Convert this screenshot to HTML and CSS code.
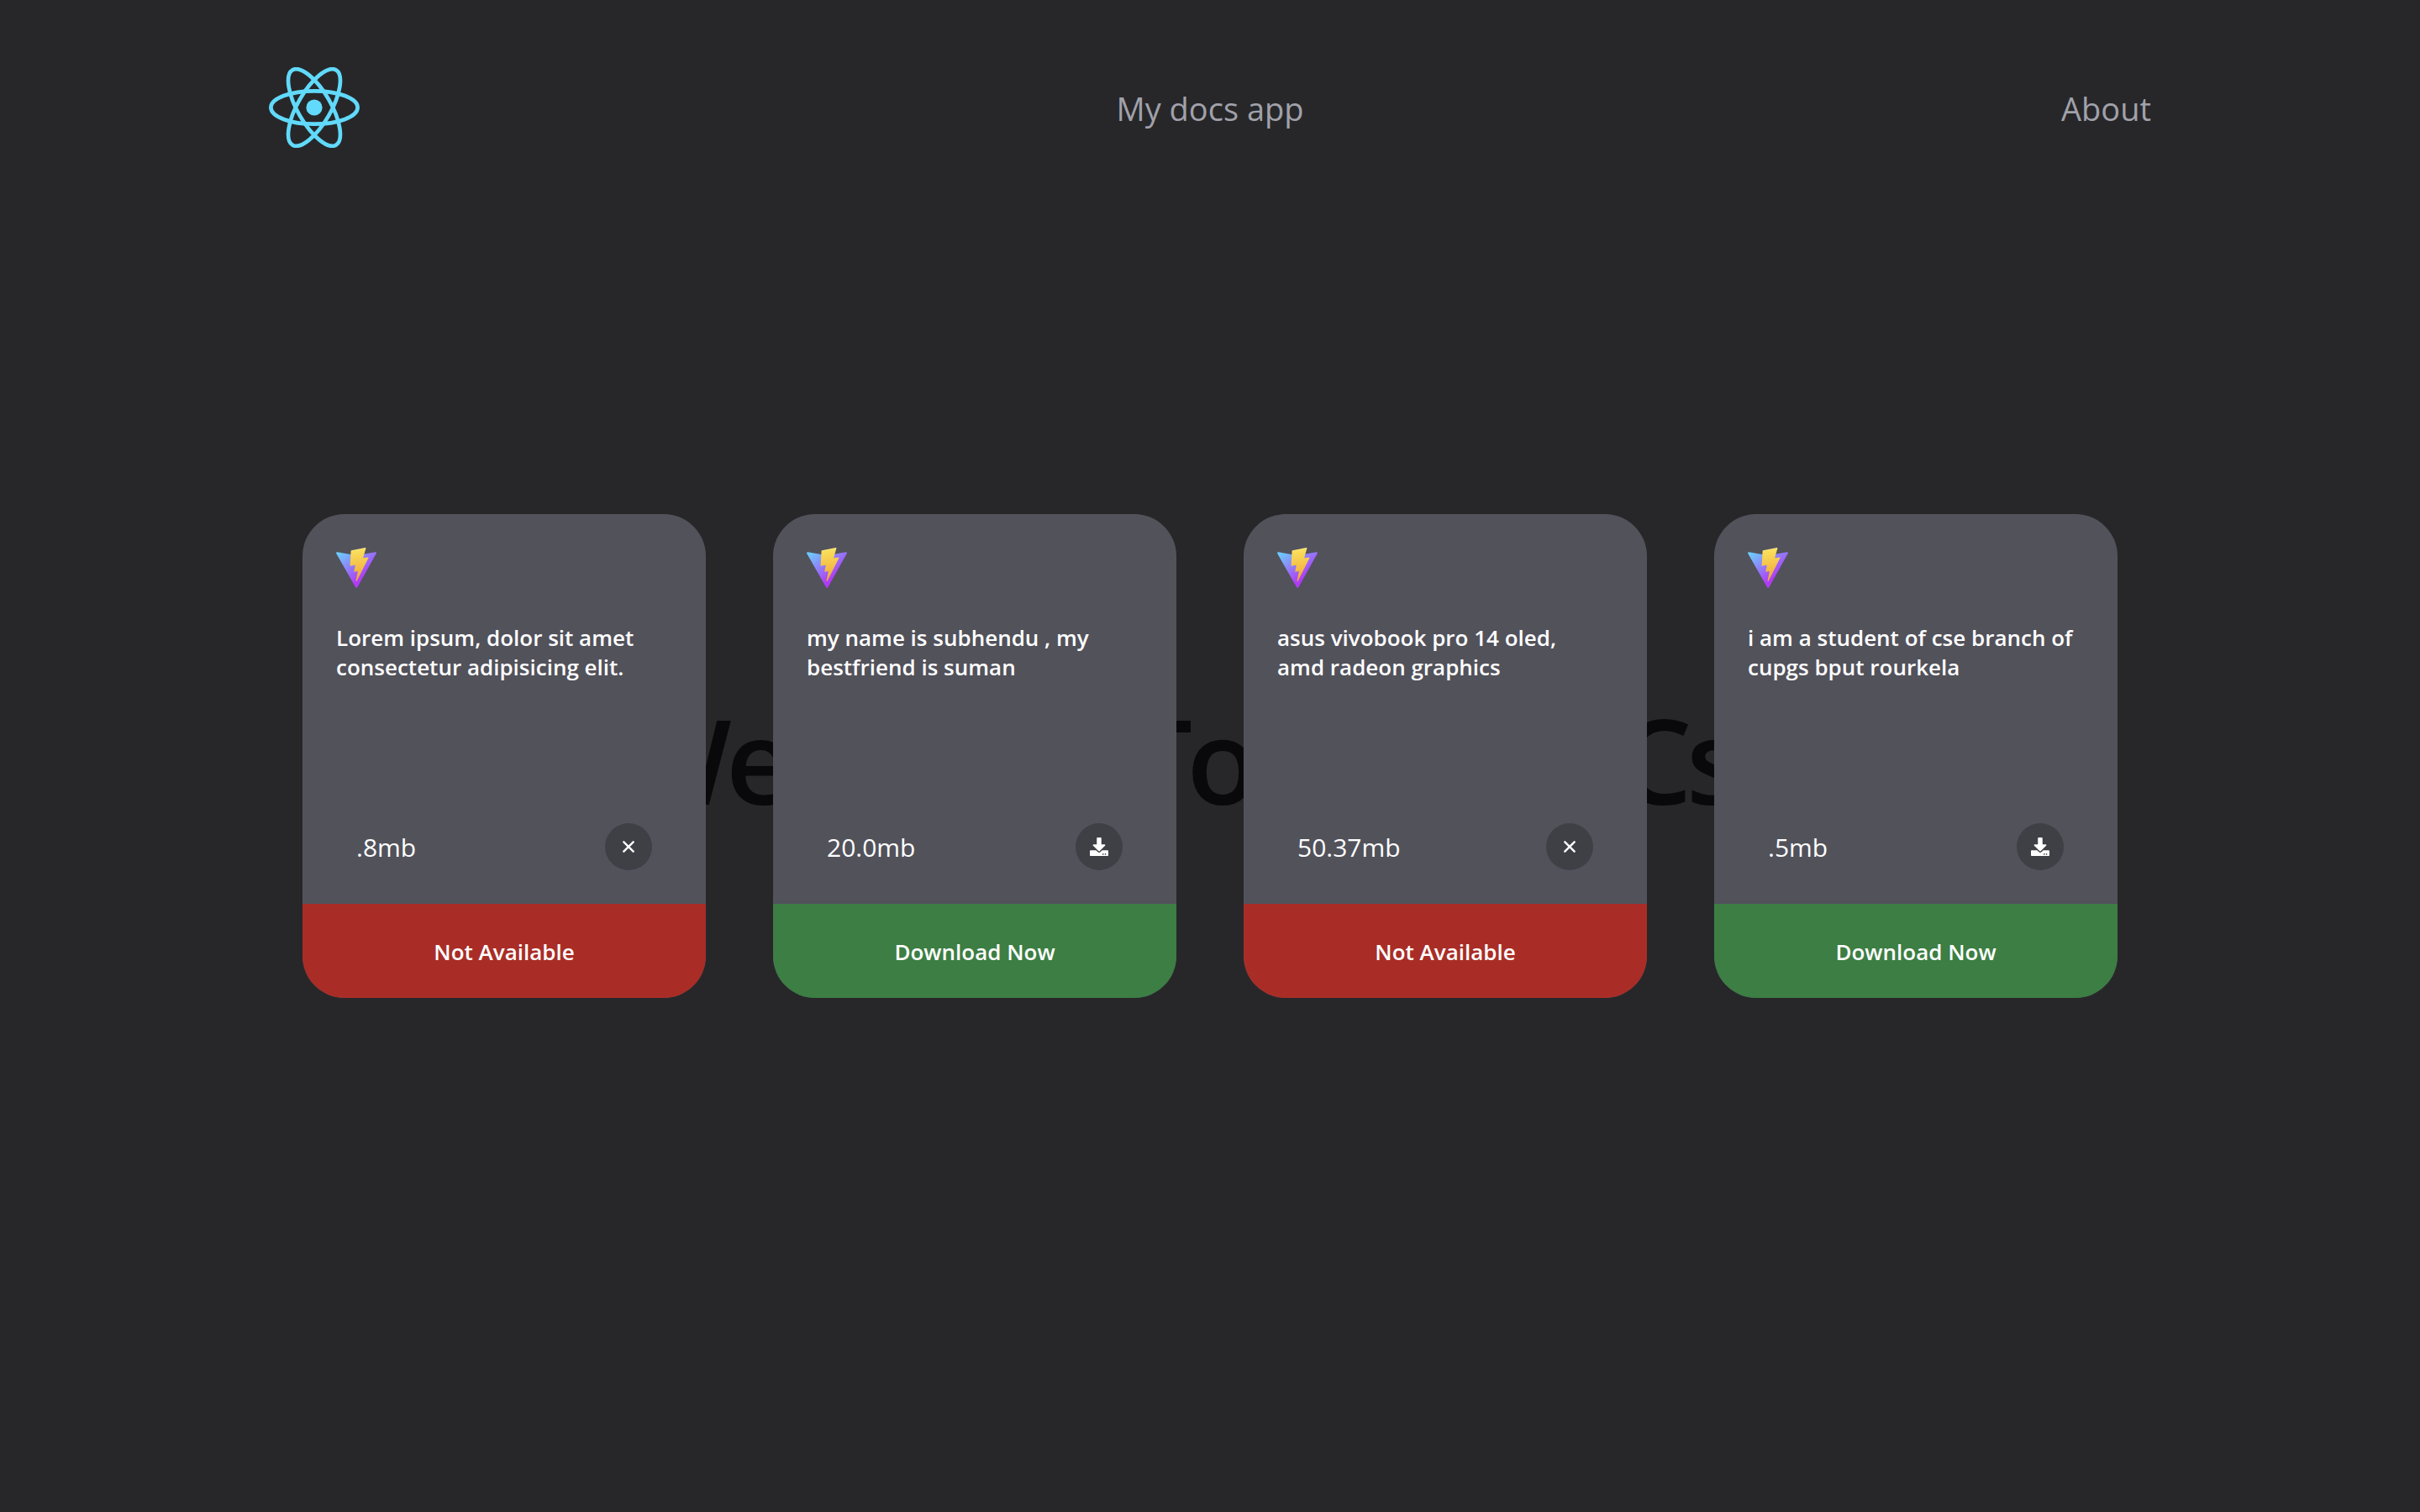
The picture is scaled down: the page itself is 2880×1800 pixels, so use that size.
FILE: index.html
```html
<!DOCTYPE html>
<html lang="en">
<head>
<meta charset="utf-8">
<title>My docs app</title>
<link rel="stylesheet" href="styles.css">
</head>
<body>
<svg class="sprite" aria-hidden="true">
  <defs>
    <linearGradient id="vite-a" x1="-.828%" x2="57.636%" y1="7.652%" y2="78.411%"><stop offset="0%" stop-color="#6BCDFC"/><stop offset="100%" stop-color="#B03BF6"/></linearGradient>
    <linearGradient id="vite-b" x1="43.376%" x2="50.316%" y1="2.242%" y2="89.03%"><stop offset="0%" stop-color="#FBE98F"/><stop offset="8.333%" stop-color="#F9DE5B"/><stop offset="100%" stop-color="#F2A93C"/></linearGradient>
  </defs>
  <symbol id="vite" viewBox="0 0 256 257">
    <path fill="url(#vite-a)" d="M255.153 37.938L134.897 252.976c-2.483 4.44-8.862 4.466-11.382.048L.875 37.958c-2.746-4.814 1.371-10.646 6.827-9.67l120.385 21.517a6.537 6.537 0 0 0 2.322-.004l117.867-21.483c5.438-.991 9.574 4.796 6.877 9.62Z"/>
    <path fill="url(#vite-b)" d="M185.432.063L96.44 17.501a3.268 3.268 0 0 0-2.634 3.014l-5.474 92.456a3.268 3.268 0 0 0 3.997 3.378l24.777-5.718c2.318-.535 4.413 1.507 3.936 3.838l-7.361 36.047c-.495 2.426 1.782 4.5 4.151 3.78l15.304-4.649c2.372-.72 4.652 1.36 4.15 3.788l-11.698 56.621c-.732 3.542 3.979 5.473 5.943 2.437l1.313-2.028l72.516-144.72c1.215-2.423-.88-5.186-3.54-4.672l-25.505 4.922c-2.396.462-4.435-1.77-3.759-4.114l16.646-57.705c.677-2.35-1.37-4.583-3.769-4.113Z"/>
  </symbol>
  <symbol id="download" viewBox="0 0 512 512">
    <path fill="currentColor" d="M216 0h80c13.3 0 24 10.7 24 24v168h87.7c17.8 0 26.7 21.5 14.1 34.1L269.7 378.3c-7.5 7.5-19.8 7.5-27.3 0L90.1 226.1c-12.6-12.6-3.7-34.1 14.1-34.1H192V24c0-13.3 10.7-24 24-24zm296 376v112c0 13.3-10.7 24-24 24H24c-13.3 0-24-10.7-24-24V376c0-13.3 10.7-24 24-24h146.7l49 49c20.1 20.1 52.5 20.1 72.6 0l49-49H488c13.3 0 24 10.7 24 24zm-124 88c0-11-9-20-20-20s-20 9-20 20 9 20 20 20 20-9 20-20zm64 0c0-11-9-20-20-20s-20 9-20 20 9 20 20 20 20-9 20-20z"/>
  </symbol>
  <symbol id="close" viewBox="0 0 24 24">
    <path fill="none" stroke="currentColor" stroke-width="2.6" stroke-linecap="round" d="M5.8 5.8l12.4 12.4m0-12.4l-12.4 12.4"/>
  </symbol>
</svg>
<header class="header">
  <a class="logo" href="#" aria-label="Home">
    <svg viewBox="-11.5 -10.23 23 20.46" aria-hidden="true"><circle r="2.05" fill="#61dafb"/><g fill="none" stroke="#61dafb"><ellipse rx="11" ry="4.2"/><ellipse rx="11" ry="4.2" transform="rotate(60)"/><ellipse rx="11" ry="4.2" transform="rotate(120)"/></g></svg>
  </a>
  <a class="nav-link" href="#docs">My docs app</a>
  <a class="nav-link nav-end" href="#about">About</a>
</header>
<main class="stage">
  <h1 class="backdrop">Welcome To Cupgs Cse</h1>
  <section class="cards" id="docs">
    <article class="card">
      <svg class="card-logo" aria-hidden="true"><use href="#vite"/></svg>
      <p class="card-text">Lorem ipsum, dolor sit amet consectetur adipisicing elit.</p>
      <div class="card-meta"><span class="size">.8mb</span><button class="round" aria-label="Close"><svg class="icon" aria-hidden="true"><use href="#close"/></svg></button></div>
      <button class="action unavailable">Not Available</button>
    </article>
    <article class="card">
      <svg class="card-logo" aria-hidden="true"><use href="#vite"/></svg>
      <p class="card-text">my name is subhendu , my bestfriend is suman</p>
      <div class="card-meta"><span class="size">20.0mb</span><button class="round" aria-label="Download"><svg class="icon" aria-hidden="true"><use href="#download"/></svg></button></div>
      <button class="action available">Download Now</button>
    </article>
    <article class="card">
      <svg class="card-logo" aria-hidden="true"><use href="#vite"/></svg>
      <p class="card-text">asus vivobook pro 14 oled, amd radeon graphics</p>
      <div class="card-meta"><span class="size">50.37mb</span><button class="round" aria-label="Close"><svg class="icon" aria-hidden="true"><use href="#close"/></svg></button></div>
      <button class="action unavailable">Not Available</button>
    </article>
    <article class="card">
      <svg class="card-logo" aria-hidden="true"><use href="#vite"/></svg>
      <p class="card-text">i am a student of cse branch of cupgs bput rourkela</p>
      <div class="card-meta"><span class="size">.5mb</span><button class="round" aria-label="Download"><svg class="icon" aria-hidden="true"><use href="#download"/></svg></button></div>
      <button class="action available">Download Now</button>
    </article>
  </section>
</main>
</body>
</html>
```
FILE: styles.css
```css
*,
*::before,
*::after {
  box-sizing: border-box;
}

body {
  margin: 0;
  min-height: 100vh;
  display: grid;
  grid-template: 256px 1fr 256px / 1fr;
  background: #27272a;
  color: #fff;
  font-family: "Open Sans", "Noto Sans", sans-serif;
}

.sprite {
  position: absolute;
  width: 0;
  height: 0;
}

.header {
  display: grid;
  grid-template-columns: 1fr auto 1fr;
  align-items: start;
  padding: 80px 320px 0;
}

.logo {
  width: 108px;
  height: 96px;
}

.logo svg {
  display: block;
  width: 100%;
  height: 100%;
}

.nav-link {
  color: #a1a1aa;
  font-size: 38px;
  line-height: 98px;
  text-decoration: none;
}

.nav-end {
  justify-self: end;
}

.stage {
  display: grid;
  align-items: center;
}

.stage > * {
  grid-area: 1 / 1;
}

.backdrop {
  margin: 0;
  padding-top: 8px;
  color: #09090b;
  font-size: 140px;
  font-weight: 600;
  line-height: 144px;
  letter-spacing: -7px;
  text-align: center;
  white-space: nowrap;
}

.cards {
  position: relative;
  display: flex;
  flex-wrap: wrap;
  justify-content: center;
  gap: 80px;
}

.card {
  display: flex;
  flex-direction: column;
  width: 480px;
  height: 576px;
  padding-top: 40px;
  overflow: hidden;
  border-radius: 50px;
  background: #52525b;
}

.card-logo {
  width: 48px;
  height: 48px;
  margin-left: 40px;
}

.card-text {
  margin: 42px 48px 0 40px;
  font-size: 26px;
  font-weight: 600;
  line-height: 35px;
}

.card-meta {
  display: flex;
  align-items: center;
  justify-content: space-between;
  margin-top: auto;
  padding: 0 64px 40px;
  font-size: 30px;
}

.size {
  padding-top: 2px;
  line-height: 40px;
}

button {
  border: 0;
  color: inherit;
  font: inherit;
  cursor: pointer;
}

.round {
  display: grid;
  place-items: center;
  width: 56px;
  height: 56px;
  padding: 0;
  border-radius: 50%;
  background: #3f3f46;
}

.icon {
  width: 22px;
  height: 22px;
}

.action {
  height: 112px;
  padding: 2px 0 0;
  font-size: 26px;
  font-weight: 600;
}

.unavailable {
  background: #a92d26;
}

.available {
  background: #3c7e43;
}
```
